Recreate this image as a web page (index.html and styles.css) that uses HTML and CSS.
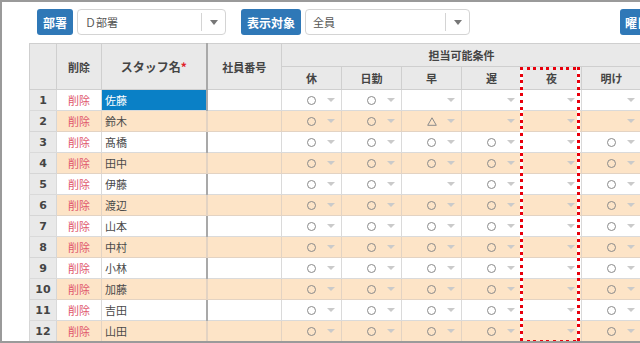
FILE: index.html
```html
<!DOCTYPE html>
<html lang="ja">
<head>
<meta charset="utf-8">
<title>スタッフ</title>
<link rel="stylesheet" href="styles.css">
</head>
<body>
<div class="frame">
  <div class="toolbar">
    <span class="btn">部署</span>
    <div class="sel sel-dept"><span class="sel-text">Ｄ部署</span><span class="sel-arrow"><i></i></span></div>
    <span class="btn btn-gap">表示対象</span>
    <div class="sel sel-target"><span class="sel-text">全員</span><span class="sel-arrow"><i></i></span></div>
    <span class="btn btn-day">曜日別</span>
  </div>
  <div class="grid-wrap">
    <table class="grid">
      <colgroup>
        <col class="w-num"><col class="w-del"><col class="w-name"><col class="w-id">
        <col class="w-c"><col class="w-c"><col class="w-c"><col class="w-c"><col class="w-c"><col class="w-c">
      </colgroup>
      <thead>
        <tr class="h1">
          <th rowspan="2"></th>
          <th rowspan="2">削除</th>
          <th rowspan="2" class="big">スタッフ名<span class="req">*</span></th>
          <th rowspan="2" class="thick">社員番号</th>
          <th colspan="6">担当可能条件</th>
        </tr>
        <tr class="h2">
          <th>休</th><th>日勤</th><th>早</th><th>遅</th><th>夜</th><th>明け</th>
        </tr>
      </thead>
      <tbody>
        <tr><td class="num">1</td><td class="del">削除</td><td class="name sel-cell">佐藤</td><td class="id"></td>
          <td><div class="cc"><i class="o"></i><b></b></div></td><td><div class="cc"><i class="o"></i><b></b></div></td><td><div class="cc"><i></i><b></b></div></td><td><div class="cc"><i></i><b></b></div></td><td><div class="cc"><i></i><b></b></div></td><td><div class="cc"><i></i><b></b></div></td></tr>
        <tr class="alt"><td class="num">2</td><td class="del">削除</td><td class="name">鈴木</td><td class="id"></td>
          <td><div class="cc"><i class="o"></i><b></b></div></td><td><div class="cc"><i class="o"></i><b></b></div></td><td><div class="cc"><i class="t"><svg width="10" height="9" viewBox="0 0 10 9"><polygon points="5,0.8 9.3,8.3 0.7,8.3" fill="none" stroke="#8a8a8a" stroke-width="1"/></svg></i><b></b></div></td><td><div class="cc"><i></i><b></b></div></td><td><div class="cc"><i></i><b></b></div></td><td><div class="cc"><i></i><b></b></div></td></tr>
        <tr><td class="num">3</td><td class="del">削除</td><td class="name">髙橋</td><td class="id"></td>
          <td><div class="cc"><i class="o"></i><b></b></div></td><td><div class="cc"><i class="o"></i><b></b></div></td><td><div class="cc"><i class="o"></i><b></b></div></td><td><div class="cc"><i class="o"></i><b></b></div></td><td><div class="cc"><i></i><b></b></div></td><td><div class="cc"><i class="o"></i><b></b></div></td></tr>
        <tr class="alt"><td class="num">4</td><td class="del">削除</td><td class="name">田中</td><td class="id"></td>
          <td><div class="cc"><i class="o"></i><b></b></div></td><td><div class="cc"><i class="o"></i><b></b></div></td><td><div class="cc"><i class="o"></i><b></b></div></td><td><div class="cc"><i class="o"></i><b></b></div></td><td><div class="cc"><i></i><b></b></div></td><td><div class="cc"><i class="o"></i><b></b></div></td></tr>
        <tr><td class="num">5</td><td class="del">削除</td><td class="name">伊藤</td><td class="id"></td>
          <td><div class="cc"><i class="o"></i><b></b></div></td><td><div class="cc"><i class="o"></i><b></b></div></td><td><div class="cc"><i></i><b></b></div></td><td><div class="cc"><i class="o"></i><b></b></div></td><td><div class="cc"><i></i><b></b></div></td><td><div class="cc"><i class="o"></i><b></b></div></td></tr>
        <tr class="alt"><td class="num">6</td><td class="del">削除</td><td class="name">渡辺</td><td class="id"></td>
          <td><div class="cc"><i class="o"></i><b></b></div></td><td><div class="cc"><i class="o"></i><b></b></div></td><td><div class="cc"><i class="o"></i><b></b></div></td><td><div class="cc"><i class="o"></i><b></b></div></td><td><div class="cc"><i></i><b></b></div></td><td><div class="cc"><i class="o"></i><b></b></div></td></tr>
        <tr><td class="num">7</td><td class="del">削除</td><td class="name">山本</td><td class="id"></td>
          <td><div class="cc"><i class="o"></i><b></b></div></td><td><div class="cc"><i class="o"></i><b></b></div></td><td><div class="cc"><i class="o"></i><b></b></div></td><td><div class="cc"><i class="o"></i><b></b></div></td><td><div class="cc"><i></i><b></b></div></td><td><div class="cc"><i class="o"></i><b></b></div></td></tr>
        <tr class="alt"><td class="num">8</td><td class="del">削除</td><td class="name">中村</td><td class="id"></td>
          <td><div class="cc"><i class="o"></i><b></b></div></td><td><div class="cc"><i class="o"></i><b></b></div></td><td><div class="cc"><i class="o"></i><b></b></div></td><td><div class="cc"><i class="o"></i><b></b></div></td><td><div class="cc"><i></i><b></b></div></td><td><div class="cc"><i class="o"></i><b></b></div></td></tr>
        <tr><td class="num">9</td><td class="del">削除</td><td class="name">小林</td><td class="id"></td>
          <td><div class="cc"><i class="o"></i><b></b></div></td><td><div class="cc"><i class="o"></i><b></b></div></td><td><div class="cc"><i class="o"></i><b></b></div></td><td><div class="cc"><i class="o"></i><b></b></div></td><td><div class="cc"><i></i><b></b></div></td><td><div class="cc"><i class="o"></i><b></b></div></td></tr>
        <tr class="alt"><td class="num">10</td><td class="del">削除</td><td class="name">加藤</td><td class="id"></td>
          <td><div class="cc"><i class="o"></i><b></b></div></td><td><div class="cc"><i class="o"></i><b></b></div></td><td><div class="cc"><i class="o"></i><b></b></div></td><td><div class="cc"><i class="o"></i><b></b></div></td><td><div class="cc"><i></i><b></b></div></td><td><div class="cc"><i class="o"></i><b></b></div></td></tr>
        <tr><td class="num">11</td><td class="del">削除</td><td class="name">吉田</td><td class="id"></td>
          <td><div class="cc"><i class="o"></i><b></b></div></td><td><div class="cc"><i class="o"></i><b></b></div></td><td><div class="cc"><i class="o"></i><b></b></div></td><td><div class="cc"><i class="o"></i><b></b></div></td><td><div class="cc"><i></i><b></b></div></td><td><div class="cc"><i class="o"></i><b></b></div></td></tr>
        <tr class="alt"><td class="num">12</td><td class="del">削除</td><td class="name">山田</td><td class="id"></td>
          <td><div class="cc"><i class="o"></i><b></b></div></td><td><div class="cc"><i class="o"></i><b></b></div></td><td><div class="cc"><i class="o"></i><b></b></div></td><td><div class="cc"><i class="o"></i><b></b></div></td><td><div class="cc"><i></i><b></b></div></td><td><div class="cc"><i class="o"></i><b></b></div></td></tr>
      </tbody>
    </table>
    <div class="highlight"></div>
  </div>
</div>
</body>
</html>
```
FILE: styles.css
```css
html, body {
  margin: 0;
  padding: 0;
  background: #fff;
}
body {
  font-family: "Noto Sans CJK JP", "Noto Sans", sans-serif;
  font-size: 11px;
  color: #444;
}
.frame {
  width: 640px;
  height: 343px;
  box-sizing: border-box;
  border-style: solid;
  border-color: #9a9a9a;
  border-width: 2px 0 2px 2px;
  overflow: hidden;
  background: #fff;
}
.toolbar {
  display: flex;
  align-items: center;
  padding: 7px 0 0 35px;
  height: 26px;
  white-space: nowrap;
}
.btn {
  display: flex;
  align-items: center;
  justify-content: center;
  height: 26px;
  box-sizing: border-box;
  padding: 0 6px;
  background: #2f78b7;
  color: #fff;
  font-weight: bold;
  font-size: 12px;
  border-radius: 3px;
  flex: none;
}
.btn-gap { margin-left: 15px; }
.btn-day { margin-left: 150px; width: 44px; justify-content: flex-start; padding-left: 5px; }
.sel {
  display: flex;
  align-items: stretch;
  height: 26px;
  box-sizing: border-box;
  margin-left: 4px;
  border: 1px solid #d4d4d4;
  border-radius: 4px;
  background: #fff;
  flex: none;
}
.sel-dept { width: 149px; }
.sel-target { width: 165px; }
.sel-text {
  flex: 1;
  display: flex;
  align-items: center;
  padding-left: 7px;
  color: #555;
  font-size: 11px;
}
.sel-arrow {
  width: 23px;
  border-left: 1px solid #d4d4d4;
  margin: 3px 0;
  display: flex;
  align-items: center;
  justify-content: center;
}
.sel-arrow i {
  width: 0;
  height: 0;
  border-left: 4px solid transparent;
  border-right: 4px solid transparent;
  border-top: 5px solid #777;
}
.grid-wrap {
  position: relative;
  margin: 8px 0 0 27px;
  width: 612px;
}
.grid {
  table-layout: fixed;
  border-collapse: collapse;
  width: 612px;
}
.w-num { width: 27px; }
.w-del { width: 45px; }
.w-name { width: 105px; }
.w-id { width: 75px; }
.w-c { width: 60px; }
.grid th {
  background: #e9e9e9;
  border: 1px solid #cfcfcf;
  font-weight: bold;
  color: #444;
  font-size: 11px;
  padding: 0;
  height: 22px;
  text-align: center;
  vertical-align: middle;
}
.grid th.big { font-size: 12px; }
.grid th.thick, .grid td.id { border-left: 2px solid #a9a9a9; }
.req { color: #e0202a; }
.grid td {
  border: 1px solid #dadada;
  padding: 0;
  height: 20px;
  vertical-align: middle;
  background: #fff;
}
.grid tr.alt td { background: #fde4c7; border-color: #e3d3c3; }
.grid td.num {
  background: #e9e9e9;
  text-align: center;
  font-family: "DejaVu Sans", sans-serif;
  font-weight: bold;
  font-size: 11px;
  color: #444;
}
.grid tr.alt td.num { background: #e9e9e9; border-color: #d6d6d6; }
.grid td.del {
  text-align: center;
  color: #e0566b;
}
.grid td.name {
  padding-left: 3px;
  color: #4a4a4a;
}
.grid tr td.sel-cell {
  background: #0a80c6;
  color: #fff;
}
.cc {
  display: grid;
  grid-template-columns: 1fr 10px 1fr;
  align-items: center;
  height: 20px;
}
.cc i {
  grid-column: 2;
  display: block;
  justify-self: center;
}
.cc i.o {
  width: 9px;
  height: 9px;
  box-sizing: border-box;
  border: 1px solid #8a8a8a;
  border-radius: 50%;
}
.cc i.t { width: 10px; height: 9px; }
.cc i.t svg { display: block; }
.cc b {
  grid-column: 3;
  justify-self: end;
  margin-right: 6px;
  width: 0;
  height: 0;
  border-left: 4px solid transparent;
  border-right: 4px solid transparent;
  border-top: 4px solid #cacaca;
}
.highlight {
  position: absolute;
  left: 491px;
  top: 24px;
  width: 60px;
  height: 276px;
  background:
    repeating-linear-gradient(90deg, #e8000c 0 3px, transparent 3px 6.6px) left top / 100% 3px no-repeat,
    repeating-linear-gradient(90deg, #e8000c 0 3px, transparent 3px 6.6px) left bottom / 100% 3px no-repeat,
    repeating-linear-gradient(180deg, #e8000c 0 3px, #fff 3px 6.6px) left top / 3px 100% no-repeat,
    repeating-linear-gradient(180deg, #e8000c 0 3px, #fff 3px 6.6px) right top / 3px 100% no-repeat;
  pointer-events: none;
}
```
